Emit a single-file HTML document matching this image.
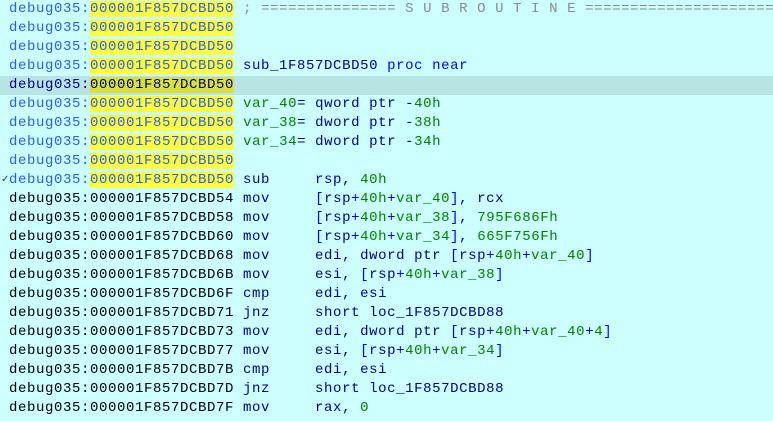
<!DOCTYPE html>
<html><head><meta charset="utf-8"><style>
html,body{margin:0;padding:0;width:773px;height:421px;overflow:hidden;background:#ccffff}
pre{margin:0;width:773px;overflow:hidden;font-family:"Liberation Mono",monospace;font-size:14px;letter-spacing:0.6px;line-height:19px;color:#000080;white-space:pre;position:relative}
.r{height:19px;padding-left:9px;position:relative;overflow:hidden}
.hl{background:#b8e4e4}
.y{background:#ffff40}
.hl .y{background:#d8e03c}
.a{color:#2a5ee8}
.hl .a{color:#00008a}
.c{color:#8a8a8a}
.g{color:#008000}
.b{color:#0000ff}
.k{color:#000000}
.chk{position:absolute;left:1px;top:0;font-size:10px;color:#333}
</style></head><body><pre>
<div class="r"><span class="a">debug035:<span class="y">000001F857DCBD50</span></span> <span class="c">; =============== S U B R O U T I N E ======================</span></div><div class="r"><span class="a">debug035:<span class="y">000001F857DCBD50</span></span></div><div class="r"><span class="a">debug035:<span class="y">000001F857DCBD50</span></span></div><div class="r"><span class="a">debug035:<span class="y">000001F857DCBD50</span></span> sub_1F857DCBD50 <span class="b">proc near</span></div><div class="r hl"><span class="a">debug035:<span class="y">000001F857DCBD50</span></span></div><div class="r"><span class="a">debug035:<span class="y">000001F857DCBD50</span></span> <span class="g">var_40</span>= qword ptr -<span class="g">40h</span></div><div class="r"><span class="a">debug035:<span class="y">000001F857DCBD50</span></span> <span class="g">var_38</span>= dword ptr -<span class="g">38h</span></div><div class="r"><span class="a">debug035:<span class="y">000001F857DCBD50</span></span> <span class="g">var_34</span>= dword ptr -<span class="g">34h</span></div><div class="r"><span class="a">debug035:<span class="y">000001F857DCBD50</span></span></div><div class="r"><span class="chk">✓</span><span class="a">debug035:<span class="y">000001F857DCBD50</span></span> sub     rsp, <span class="g">40h</span></div><div class="r"><span class="k">debug035:000001F857DCBD54</span> mov     <span class="b">[</span>rsp<span class="b">+</span><span class="g">40h</span><span class="b">+</span><span class="g">var_40</span><span class="b">]</span>, rcx</div><div class="r"><span class="k">debug035:000001F857DCBD58</span> mov     <span class="b">[</span>rsp<span class="b">+</span><span class="g">40h</span><span class="b">+</span><span class="g">var_38</span><span class="b">]</span>, <span class="g">795F686Fh</span></div><div class="r"><span class="k">debug035:000001F857DCBD60</span> mov     <span class="b">[</span>rsp<span class="b">+</span><span class="g">40h</span><span class="b">+</span><span class="g">var_34</span><span class="b">]</span>, <span class="g">665F756Fh</span></div><div class="r"><span class="k">debug035:000001F857DCBD68</span> mov     edi, dword ptr <span class="b">[</span>rsp<span class="b">+</span><span class="g">40h</span><span class="b">+</span><span class="g">var_40</span><span class="b">]</span></div><div class="r"><span class="k">debug035:000001F857DCBD6B</span> mov     esi, <span class="b">[</span>rsp<span class="b">+</span><span class="g">40h</span><span class="b">+</span><span class="g">var_38</span><span class="b">]</span></div><div class="r"><span class="k">debug035:000001F857DCBD6F</span> cmp     edi, esi</div><div class="r"><span class="k">debug035:000001F857DCBD71</span> jnz     short loc_1F857DCBD88</div><div class="r"><span class="k">debug035:000001F857DCBD73</span> mov     edi, dword ptr <span class="b">[</span>rsp<span class="b">+</span><span class="g">40h</span><span class="b">+</span><span class="g">var_40</span><span class="b">+</span><span class="g">4</span><span class="b">]</span></div><div class="r"><span class="k">debug035:000001F857DCBD77</span> mov     esi, <span class="b">[</span>rsp<span class="b">+</span><span class="g">40h</span><span class="b">+</span><span class="g">var_34</span><span class="b">]</span></div><div class="r"><span class="k">debug035:000001F857DCBD7B</span> cmp     edi, esi</div><div class="r"><span class="k">debug035:000001F857DCBD7D</span> jnz     short loc_1F857DCBD88</div><div class="r"><span class="k">debug035:000001F857DCBD7F</span> mov     rax, <span class="g">0</span></div>
</pre></body></html>
